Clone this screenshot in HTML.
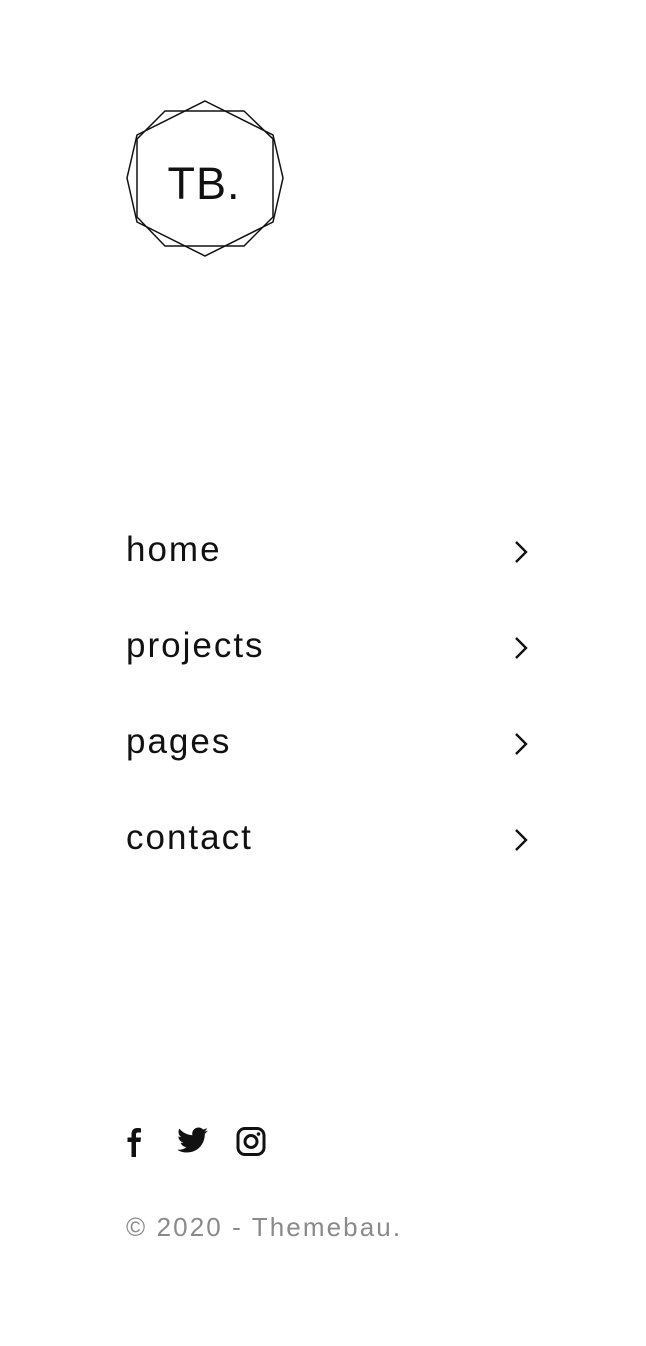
<!DOCTYPE html>
<html><head><meta charset="utf-8"><style>
body{margin:0;width:646px;height:1346px;background:#fff;font-family:"Liberation Sans",sans-serif;color:#111;position:relative;overflow:hidden}
.nav{position:absolute;left:126px;font-size:35px;line-height:40px;letter-spacing:2px}
.chev{position:absolute;left:512px}
.copy{position:absolute;left:126px;top:1211px;font-size:26px;line-height:32px;color:#8a8a8a;letter-spacing:2.1px}
</style></head><body>
<svg style="position:absolute;left:0;top:0" width="300" height="280">
<polygon points="165,111 244,111 273,139 273,217 244,246 165,246 137,217 137,139" fill="none" stroke="#111" stroke-width="1.5"/>
<polygon points="205,101 273,135 283,178 273,222 205,256 137,222 127,178 137,135" fill="none" stroke="#111" stroke-width="1.5"/>
<text x="204" y="199" text-anchor="middle" font-family="Liberation Sans, sans-serif" font-size="45" letter-spacing="1" fill="#111">TB.</text>
</svg>
<div class="nav" style="top:530px">home</div>
<div class="nav" style="top:626px">projects</div>
<div class="nav" style="top:722px">pages</div>
<div class="nav" style="top:818px">contact</div>
<svg class="chev" style="top:539px" width="20" height="26"><path d="M4 3 L14 13 L4 23" fill="none" stroke="#111" stroke-width="2.4"/></svg>
<svg class="chev" style="top:635px" width="20" height="26"><path d="M4 3 L14 13 L4 23" fill="none" stroke="#111" stroke-width="2.4"/></svg>
<svg class="chev" style="top:731px" width="20" height="26"><path d="M4 3 L14 13 L4 23" fill="none" stroke="#111" stroke-width="2.4"/></svg>
<svg class="chev" style="top:827px" width="20" height="26"><path d="M4 3 L14 13 L4 23" fill="none" stroke="#111" stroke-width="2.4"/></svg>
<svg style="position:absolute;left:120px;top:1124px" width="160" height="36">
<path d="M16 33 V18 H20.5 L21 13.5 H16 V10.5 C16 9.2 16.5 8.5 18 8.5 H21 V4.3 C20.4 4.2 19 4 17.3 4 C13.8 4 11.5 6 11.5 10 V13.5 H7.5 V18 H11.5 V33 Z" fill="#111"/>
<path d="M88 6.5 C86.8 7 85.6 7.4 84.3 7.5 C85.6 6.7 86.6 5.5 87.1 4 C85.9 4.7 84.5 5.3 83.1 5.5 C81.9 4.3 80.3 3.5 78.5 3.5 C75 3.5 72.2 6.3 72.2 9.8 C72.2 10.3 72.3 10.8 72.4 11.2 C67.2 11 62.5 8.4 59.4 4.6 C58.8 5.6 58.5 6.6 58.5 7.8 C58.5 10 59.6 12 61.3 13.1 C60.3 13.1 59.3 12.8 58.4 12.3 C58.4 15.4 60.6 18 63.5 18.5 C62.6 18.8 61.4 18.8 60.6 18.7 C61.4 21.2 63.7 23 66.5 23.1 C64.3 24.8 61.6 25.8 58.7 25.8 C58.2 25.8 57.7 25.8 57.2 25.7 C60 27.5 63.4 28.5 66.9 28.5 C78.5 28.5 84.8 18.9 84.8 10.6 L84.8 9.8 C86 8.9 87.1 7.8 88 6.5 Z" fill="#111"/>
<rect x="118" y="4.5" width="26" height="26" rx="7" fill="none" stroke="#111" stroke-width="3"/>
<circle cx="131" cy="17.5" r="6" fill="none" stroke="#111" stroke-width="3"/>
<circle cx="138.5" cy="10" r="1.8" fill="#111"/>
</svg>
<div class="copy">© 2020 - Themebau.</div>
</body></html>
